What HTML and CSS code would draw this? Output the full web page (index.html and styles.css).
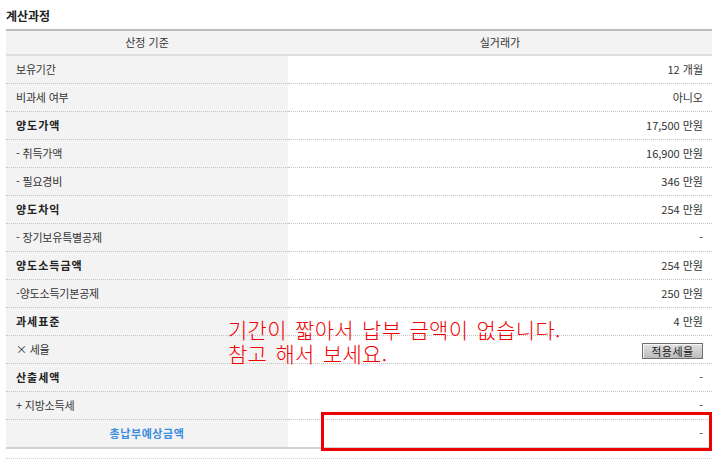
FILE: index.html
```html
<!DOCTYPE html>
<html lang="ko">
<head>
<meta charset="utf-8">
<link rel="stylesheet" href="styles.css">
</head>
<body>
<div class="page">
  <h2 class="title">계산과정</h2>
  <table class="calc">
    <thead>
      <tr><th class="lh">산정 기준</th><th class="rh">실거래가</th></tr>
    </thead>
    <tbody>
      <tr><td class="lbl">보유기간</td><td class="val">12 개월</td></tr>
      <tr><td class="lbl">비과세 여부</td><td class="val">아니오</td></tr>
      <tr><td class="lbl b">양도가액</td><td class="val">17,500 만원</td></tr>
      <tr><td class="lbl">- 취득가액</td><td class="val">16,900 만원</td></tr>
      <tr><td class="lbl">- 필요경비</td><td class="val">346 만원</td></tr>
      <tr><td class="lbl b">양도차익</td><td class="val">254 만원</td></tr>
      <tr><td class="lbl">- 장기보유특별공제</td><td class="val">-</td></tr>
      <tr><td class="lbl b">양도소득금액</td><td class="val">254 만원</td></tr>
      <tr><td class="lbl">-양도소득기본공제</td><td class="val">250 만원</td></tr>
      <tr><td class="lbl b">과세표준</td><td class="val">4 만원</td></tr>
      <tr><td class="lbl">× 세율</td><td class="val"><button class="rate-btn" type="button">적용세율</button></td></tr>
      <tr><td class="lbl b">산출세액</td><td class="val">-</td></tr>
      <tr><td class="lbl">+ 지방소득세</td><td class="val">-</td></tr>
      <tr class="total"><td class="lbl tot">총납부예상금액</td><td class="val">-</td></tr>
    </tbody>
  </table>
  <div class="next-line"></div>
  <div class="note">기간이 짧아서 납부 금액이 없습니다.<br>참고 해서 보세요.</div>
  <div class="highlight"></div>
</div>
</body>
</html>
```

FILE: styles.css
```css
html, body {
  margin: 0;
  padding: 0;
  background: #ffffff;
}

.page {
  position: relative;
  width: 720px;
  height: 459px;
  overflow: hidden;
  padding: 0 8px 0 6px;
  box-sizing: border-box;
  font-family: "Noto Sans CJK KR", "Noto Sans", sans-serif;
  color: #333333;
}

.title {
  margin: 0;
  padding-top: 9px;
  height: 29px;
  box-sizing: border-box;
  font-size: 12px;
  line-height: 14px;
  font-weight: bold;
  color: #222222;
}

.calc {
  width: 706px;
  border-collapse: separate;
  border-spacing: 0;
  font-size: 11px;
  table-layout: fixed;
}

.calc th {
  height: 23px;
  padding: 0;
  background: #f3f3f3;
  border-top: 2px solid #bdbdbd;
  border-bottom: 2px solid #dedede;
  font-weight: normal;
  font-size: 11px;
  color: #333333;
  text-align: center;
  line-height: 23px;
}

.calc th.lh {
  width: 282px;
}

.calc td {
  height: 27px;
  padding: 0;
  border-bottom: 1px dotted #c4c4c4;
  line-height: 27px;
  box-sizing: content-box;
}

.calc td.lbl {
  background: #f3f3f3;
  padding-left: 10px;
  color: #333333;
  letter-spacing: -0.2px;
}

.calc td.lbl.b {
  font-weight: bold;
  font-size: 11px;
  color: #222222;
  letter-spacing: 1px;
}

.calc td.val {
  text-align: right;
  padding-right: 9px;
  color: #333333;
}

.calc tr.total td {
  border-bottom: 2px solid #d2d2d2;
}

.calc td.lbl.tot {
  text-align: center;
  padding-left: 0;
  color: #3b8de0;
  font-weight: bold;
  letter-spacing: 0.6px;
}

.rate-btn {
  display: inline-block;
  vertical-align: middle;
  width: 61px;
  height: 16px;
  margin: 0;
  padding: 0;
  font-family: "Noto Sans CJK KR", sans-serif;
  font-size: 11px;
  line-height: 13px;
  color: #222222;
  background: linear-gradient(#e2e2e2, #bcbcbc);
  border: 1px solid #6e6e6e;
  box-shadow: inset 1px 1px 0 #f6f6f6;
  letter-spacing: 0.5px;
}

.next-line {
  margin-top: 9px;
  border-top: 1px dotted #d0d0d0;
}

.note {
  position: absolute;
  left: 228px;
  top: 317px;
  font-size: 21px;
  line-height: 24px;
  color: #f00000;
  word-spacing: 2px;
  letter-spacing: 0.3px;
  font-weight: 300;
  white-space: nowrap;
}

.highlight {
  position: absolute;
  left: 321px;
  top: 412px;
  width: 391px;
  height: 39px;
  box-sizing: border-box;
  border: 3px solid #ee0000;
}
```
